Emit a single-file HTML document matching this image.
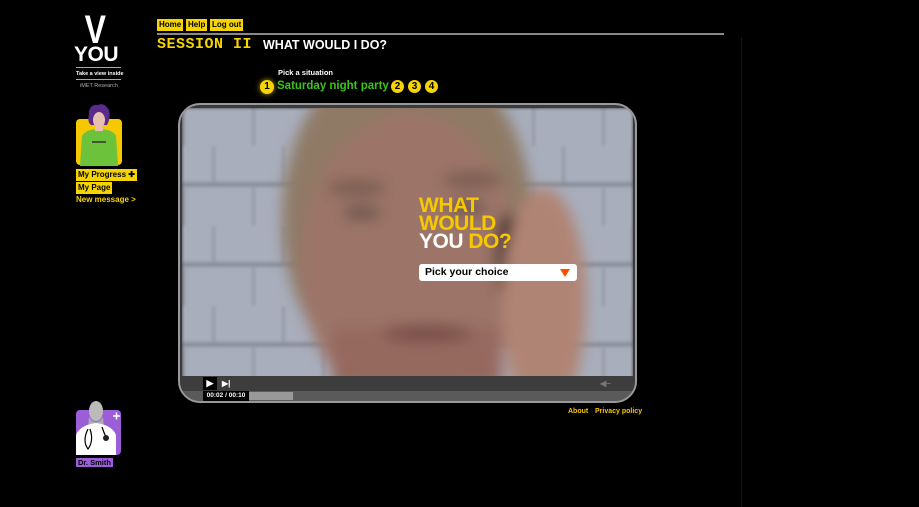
<!DOCTYPE html>
<html><head><meta charset="utf-8"><style>
*{margin:0;padding:0;box-sizing:border-box}
body{width:919px;height:507px;background:#000;position:relative;overflow:hidden;font-family:"Liberation Sans",sans-serif;font-weight:bold}
.a{position:absolute}
.btn{position:absolute;background:#f5d400;color:#000;font-size:8px;padding:0 2px;height:12px;line-height:12px;white-space:nowrap}
</style></head><body>
<div class="a" style="left:741px;top:37px;width:1px;height:470px;background:#161616"></div>
<!-- logo -->
<div class="a" style="left:82px;top:12px;font-size:40px;color:#fff;font-weight:900;line-height:36px;transform:scaleX(0.8)">V</div>
<div class="a" style="left:74px;top:45px;font-size:21px;color:#fff;line-height:20px;letter-spacing:-0.5px">YOU</div>
<div class="a" style="left:76px;top:67px;width:45px;height:1px;background:#aaa"></div>
<div class="a" style="left:76px;top:71px;font-size:5.5px;color:#fff">Take a view inside</div>
<div class="a" style="left:76px;top:79px;width:45px;height:1px;background:#aaa"></div>
<div class="a" style="left:80px;top:83px;font-size:5.5px;color:#aaa;font-weight:normal">iMET Research</div>
<!-- nav -->
<div class="btn" style="left:157px;top:19px">Home</div>
<div class="btn" style="left:186px;top:19px">Help</div>
<div class="btn" style="left:210px;top:19px">Log out</div>
<div class="a" style="left:157px;top:33px;width:567px;height:2px;background:#888"></div>
<div class="a" style="left:157px;top:37px;font-size:15px;color:#f5d400;letter-spacing:0.5px;font-family:'Liberation Mono',monospace;line-height:15px">SESSION II</div>
<div class="a" style="left:263px;top:38px;font-size:12.5px;color:#fff">WHAT WOULD I DO?</div>
<div class="a" style="left:278px;top:68px;font-size:7.5px;color:#fff">Pick a situation</div>
<div class="a" style="left:260px;top:80px;width:14px;height:14px;border-radius:50%;background:#f5d400;color:#000;font-size:10px;text-align:center;line-height:14px;box-shadow:0 0 6px #b89a00">1</div>
<div class="a" style="left:277px;top:80px;font-size:11.5px;color:#3cc21c">Saturday night party</div>
<div class="a" style="left:391px;top:80px;width:13px;height:13px;border-radius:50%;background:#f5d400;color:#000;font-size:10px;text-align:center;line-height:13px">2</div>
<div class="a" style="left:408px;top:80px;width:13px;height:13px;border-radius:50%;background:#f5d400;color:#000;font-size:10px;text-align:center;line-height:13px">3</div>
<div class="a" style="left:425px;top:80px;width:13px;height:13px;border-radius:50%;background:#f5d400;color:#000;font-size:10px;text-align:center;line-height:13px">4</div>
<!-- avatar -->
<div class="a" style="left:76px;top:119px;width:46px;height:46px;border-radius:4px;background:#f5c800"></div>
<svg class="a" style="left:76px;top:102px" width="46" height="64">
<path d="M22 3 Q13 2 13 12 Q11 20 15 23 L31 23 Q35 16 33 8 Q28 0 22 3Z" fill="#5a2a8c"/>
<ellipse cx="23" cy="18" rx="6" ry="8" fill="#e8c0b0"/>
<path d="M12 10 Q22 5 32 12 L30 8 Q22 2 14 8Z" fill="#5a2a8c"/>
<path d="M6 34 Q10 27 23 27 Q36 27 40 34 L42 64 L4 64Z" fill="#6cc23a"/>
<path d="M16 40 h14" stroke="#333" stroke-width="1.5"/>
<rect x="19" y="25" width="8" height="4" fill="#e8c0b0"/>
</svg>
<div class="btn" style="left:76px;top:169px">My Progress ✚</div>
<div class="btn" style="left:76px;top:182px">My Page</div>
<div class="a" style="left:76px;top:195px;font-size:8px;color:#f5d400">New message &gt;</div>
<!-- doctor -->
<div class="a" style="left:76px;top:410px;width:45px;height:45px;border-radius:4px;background:#9b5ed8"></div>
<svg class="a" style="left:76px;top:397px" width="45" height="58">
<ellipse cx="20" cy="14" rx="7" ry="10" fill="#bbb"/>
<path d="M13 20 Q20 30 27 20 L28 30 L12 30Z" fill="#aaa"/>
<path d="M0 38 Q4 28 20 26 Q36 28 40 38 L40 58 L0 58Z" fill="#fff"/>
<path d="M12 32 Q6 44 12 52 Q18 44 14 32" stroke="#000" fill="none" stroke-width="1.2"/>
<path d="M26 30 Q28 36 30 40" stroke="#000" fill="none" stroke-width="1.2"/>
<circle cx="30" cy="41" r="3" fill="#222"/>
<path d="M37 19 h7 M40.5 15.5 v7" stroke="#fff" stroke-width="1.5"/>
</svg>
<div class="btn" style="left:76px;top:458px;background:#9b5ed8;color:#000;font-size:7.5px;height:9px;line-height:9px">Dr. Smith</div>
<!-- video -->
<div class="a" style="left:178px;top:103px;width:459px;height:300px;border-radius:22px;background:#3a3a3a;border:2px solid #999;overflow:hidden">
<svg class="a" style="left:2px;top:3px" width="451" height="272">
<defs><filter id="b"><feGaussianBlur stdDeviation="7"/></filter>
<filter id="c"><feGaussianBlur stdDeviation="1.5"/></filter>
<pattern id="br" width="70" height="80" patternUnits="userSpaceOnUse"><rect width="70" height="80" fill="#a8aebc"/><rect y="74" width="70" height="5" fill="#8a8f9c"/><rect x="30" y="38" width="3" height="36" fill="#959aa6"/><rect x="0" y="0" width="3" height="38" fill="#959aa6"/></pattern></defs>
<rect width="451" height="272" fill="url(#br)" filter="url(#c)"/>
<g filter="url(#b)">
<ellipse cx="225" cy="110" rx="125" ry="170" fill="#8f7a66"/>
<ellipse cx="228" cy="155" rx="110" ry="150" fill="#9c7567"/>
<rect x="150" y="220" width="170" height="60" fill="#96695e"/>
<ellipse cx="175" cy="80" rx="30" ry="9" fill="#7c5e52"/>
<ellipse cx="290" cy="72" rx="30" ry="9" fill="#7c5e52"/>
<ellipse cx="180" cy="105" rx="20" ry="7" fill="#6a5550"/>
<ellipse cx="285" cy="100" rx="20" ry="7" fill="#6a5550"/>
<ellipse cx="245" cy="225" rx="45" ry="9" fill="#7a4f4a"/>
<ellipse cx="326" cy="150" rx="12" ry="45" fill="#2a2424"/>
<ellipse cx="362" cy="195" rx="42" ry="115" fill="#b08474"/>
</g>
</svg>
<div class="a" style="left:239px;top:92px;font-size:21px;line-height:18px;color:#f5c800;font-weight:bold;letter-spacing:-0.5px">WHAT<br>WOULD<br><span style="color:#fff">YOU</span> DO?</div>
<div class="a" style="left:239px;top:159px;width:158px;height:17px;background:#fff;border-radius:3px;font-size:10.5px;color:#000;padding-left:6px;line-height:17px">Pick your choice<span style="position:absolute;right:7px;top:5px;border-left:5px solid transparent;border-right:5px solid transparent;border-top:8px solid #ff4d00"></span></div>
<div class="a" style="left:0;top:271px;width:459px;height:15px;background:#3d3d3d"></div>
<div class="a" style="left:23px;top:272px;width:14px;height:13px;background:#000;color:#fff;font-size:9px;text-align:center;line-height:13px">▶</div>
<div class="a" style="left:42px;top:272px;color:#fff;font-size:8px;line-height:13px">▶|</div>
<div class="a" style="left:420px;top:272px;color:#777;font-size:8px;line-height:13px">◀−</div>
<div class="a" style="left:0;top:286px;width:459px;height:10px;background:#5a5a5a"></div>
<div class="a" style="left:23px;top:286px;width:46px;height:10px;background:#000;color:#fff;font-size:6.5px;text-align:center;line-height:10px">00:02 / 00:10</div>
<div class="a" style="left:69px;top:287px;width:44px;height:8px;background:#999"></div>
</div>
<div class="a" style="left:568px;top:408px;font-size:7px;color:#f5c800">About</div>
<div class="a" style="left:595px;top:408px;font-size:7px;color:#f5c800">Privacy policy</div>
</body></html>
